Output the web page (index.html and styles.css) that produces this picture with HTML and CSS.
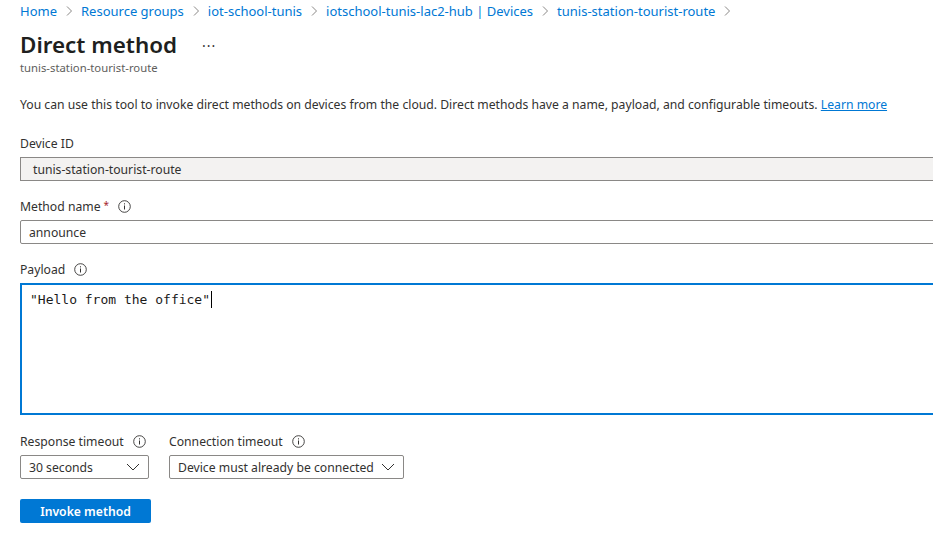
FILE: index.html
```html
<!DOCTYPE html>
<html>
<head>
<meta charset="utf-8">
<link rel="stylesheet" href="styles.css">
</head>
<body>
<div class="page">
  <nav class="crumbs">
    <a>Home</a><span class="sep"><svg width="8" height="12" viewBox="0 0 8 12"><path d="M2 1.5 L6.5 6 L2 10.5" fill="none" stroke="#8a8886" stroke-width="1"/></svg></span>
    <a>Resource groups</a><span class="sep"><svg width="8" height="12" viewBox="0 0 8 12"><path d="M2 1.5 L6.5 6 L2 10.5" fill="none" stroke="#8a8886" stroke-width="1"/></svg></span>
    <a>iot-school-tunis</a><span class="sep"><svg width="8" height="12" viewBox="0 0 8 12"><path d="M2 1.5 L6.5 6 L2 10.5" fill="none" stroke="#8a8886" stroke-width="1"/></svg></span>
    <a>iotschool-tunis-lac2-hub | Devices</a><span class="sep"><svg width="8" height="12" viewBox="0 0 8 12"><path d="M2 1.5 L6.5 6 L2 10.5" fill="none" stroke="#8a8886" stroke-width="1"/></svg></span>
    <a>tunis-station-tourist-route</a><span class="sep"><svg width="8" height="12" viewBox="0 0 8 12"><path d="M2 1.5 L6.5 6 L2 10.5" fill="none" stroke="#8a8886" stroke-width="1"/></svg></span>
  </nav>
  <header class="title-row">
    <h1 class="title">Direct method</h1>
    <span class="more">···</span>
  </header>
  <div class="subtitle">tunis-station-tourist-route</div>

  <p class="desc">You can use this tool to invoke direct methods on devices from the cloud. Direct methods have a name, payload, and configurable timeouts. <a class="link">Learn more</a></p>

  <div class="field first">
    <div class="label">Device ID</div>
    <div class="input readonly">tunis-station-tourist-route</div>
  </div>

  <div class="field">
    <div class="label">Method name<span class="req">*</span><span class="info"><svg width="13" height="13" viewBox="0 0 13 13"><circle cx="6.5" cy="6.5" r="5.8" fill="none" stroke="#323130" stroke-width="0.9"/><rect x="6" y="5.5" width="1" height="4" fill="#323130"/><rect x="6" y="3.3" width="1" height="1.1" fill="#323130"/></svg></span></div>
    <div class="input">announce</div>
  </div>

  <div class="field">
    <div class="label">Payload<span class="info"><svg width="13" height="13" viewBox="0 0 13 13"><circle cx="6.5" cy="6.5" r="5.8" fill="none" stroke="#323130" stroke-width="0.9"/><rect x="6" y="5.5" width="1" height="4" fill="#323130"/><rect x="6" y="3.3" width="1" height="1.1" fill="#323130"/></svg></span></div>
    <div class="editor"><span class="code">"Hello from the office"</span><span class="caret"></span></div>
  </div>

  <div class="row">
    <div class="field">
      <div class="label">Response timeout<span class="info"><svg width="13" height="13" viewBox="0 0 13 13"><circle cx="6.5" cy="6.5" r="5.8" fill="none" stroke="#323130" stroke-width="0.9"/><rect x="6" y="5.5" width="1" height="4" fill="#323130"/><rect x="6" y="3.3" width="1" height="1.1" fill="#323130"/></svg></span></div>
      <div class="select w1"><span>30 seconds</span><svg width="14" height="8" viewBox="0 0 14 8"><path d="M1 1 L7 7 L13 1" fill="none" stroke="#323130" stroke-width="1"/></svg></div>
    </div>
    <div class="field">
      <div class="label">Connection timeout<span class="info"><svg width="13" height="13" viewBox="0 0 13 13"><circle cx="6.5" cy="6.5" r="5.8" fill="none" stroke="#323130" stroke-width="0.9"/><rect x="6" y="5.5" width="1" height="4" fill="#323130"/><rect x="6" y="3.3" width="1" height="1.1" fill="#323130"/></svg></span></div>
      <div class="select w2"><span>Device must already be connected</span><svg width="14" height="8" viewBox="0 0 14 8"><path d="M1 1 L7 7 L13 1" fill="none" stroke="#323130" stroke-width="1"/></svg></div>
    </div>
  </div>

  <button class="btn">Invoke method</button>
</div>
</body>
</html>
```
FILE: styles.css
```css
html, body {
  margin: 0;
  padding: 0;
  background: #ffffff;
  overflow: hidden;
}
body {
  font-family: "Noto Sans", "Open Sans", sans-serif;
  color: #323130;
  font-size: 12.2px;
}
.page {
  padding: 0 0 0 20px;
  width: 940px;
}
.crumbs {
  display: flex;
  align-items: center;
  height: 22px;
  font-size: 13px;
  color: #0078d4;
}
.crumbs a { color: #0078d4; }
.sep {
  display: inline-flex;
  align-items: center;
  padding: 0 8px 0 8px;
}
.title-row {
  display: flex;
  align-items: center;
  height: 44px;
}
.title {
  margin: 0;
  font-size: 22.4px;
  font-weight: 600;
  color: #201f1e;
}
.more {
  margin-left: 25px;
  font-size: 14px;
  color: #323130;
  letter-spacing: 1px;
  margin-top: 2px;
}
.subtitle {
  font-size: 11.3px;
  color: #605e5c;
  height: 16px;
  line-height: 16px;
  margin-top: -6px;
}
.desc {
  margin: 19px 0 0;
  line-height: 20px;
}
.link {
  color: #0078d4;
  text-decoration: underline;
}
.field { margin-top: 15px; }
.field.first { margin-top: 18px; }
.label {
  display: flex;
  align-items: center;
  height: 20px;
  margin-bottom: 4px;
  white-space: nowrap;
}
.req {
  color: #a4262c;
  margin-left: 3px;
  margin-top: -3px;
  font-size: 10px;
}
.info {
  display: inline-flex;
  margin-left: 9px;
}
.input {
  box-sizing: border-box;
  width: 940px;
  height: 24px;
  border: 1px solid #8a8886;
  border-radius: 2px;
  padding: 1px 8px 0;
  line-height: 22px;
  color: #323130;
}
.input.readonly {
  background: #f3f2f1;
  padding-left: 12px;
  border-radius: 0;
}
.editor {
  box-sizing: border-box;
  width: 940px;
  height: 132px;
  border: 2px solid #0078d4;
  padding: 6px 8px;
  font-family: "DejaVu Sans Mono", "Liberation Mono", monospace;
  font-size: 13px;
  line-height: 18px;
  color: #1b1a19;
  display: flex;
  align-items: flex-start;
}
.caret {
  display: inline-block;
  width: 1px;
  height: 17px;
  background: #000;
  margin-left: 1px;
}
.row {
  display: flex;
  gap: 20px;
  margin-top: 16px;
}
.row .field { margin-top: 0; }
.select {
  box-sizing: border-box;
  height: 24px;
  border: 1px solid #8a8886;
  border-radius: 2px;
  display: flex;
  align-items: center;
  justify-content: space-between;
  padding: 0 8px;
  white-space: nowrap;
}
.w1 { width: 129px; }
.w2 { width: 235px; }
.btn {
  display: block;
  margin-top: 20px;
  width: 131px;
  height: 24px;
  background: #0078d4;
  color: #fff;
  border: none;
  border-radius: 2px;
  font-family: "Noto Sans", "Open Sans", sans-serif;
  font-weight: 600;
  font-size: 12.2px;
  padding: 0;
}
```
